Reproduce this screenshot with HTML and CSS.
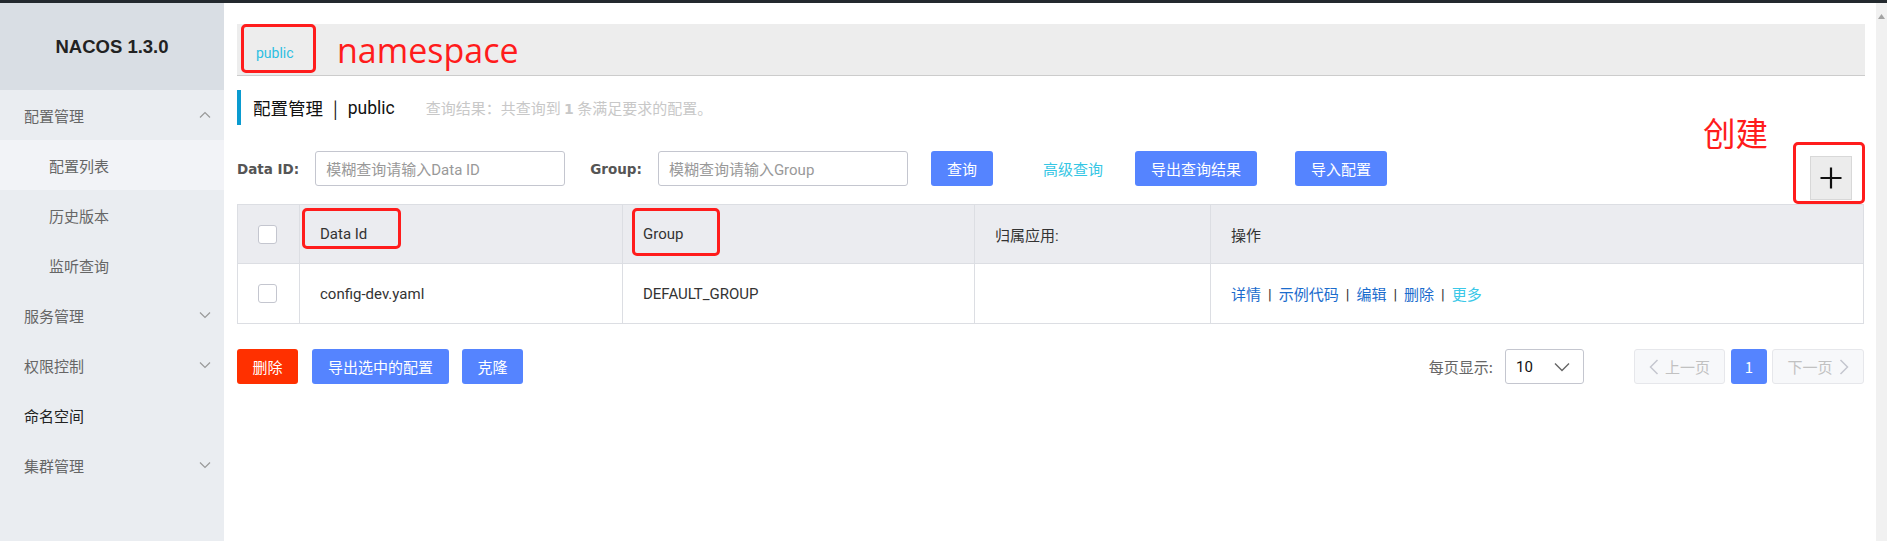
FILE: index.html
```html
<!DOCTYPE html>
<html lang="zh-CN">
<head>
<meta charset="utf-8">
<title>Nacos</title>
<link rel="stylesheet" href="styles.css">
</head>
<body>
<div class="topbar"></div>
<div class="layout">
  <aside class="sidebar">
    <div class="logo">NACOS 1.3.0</div>
    <ul class="menu">
      <li class="item open">配置管理<svg class="chev" width="12" height="8" viewBox="0 0 12 8"><polyline points="1,6.5 6,1.5 11,6.5" fill="none" stroke="#999" stroke-width="1.2"/></svg></li>
      <li class="item sub active">配置列表</li>
      <li class="item sub">历史版本</li>
      <li class="item sub">监听查询</li>
      <li class="item">服务管理<svg class="chev" width="12" height="8" viewBox="0 0 12 8"><polyline points="1,1.5 6,6.5 11,1.5" fill="none" stroke="#999" stroke-width="1.2"/></svg></li>
      <li class="item">权限控制<svg class="chev" width="12" height="8" viewBox="0 0 12 8"><polyline points="1,1.5 6,6.5 11,1.5" fill="none" stroke="#999" stroke-width="1.2"/></svg></li>
      <li class="item leaf">命名空间</li>
      <li class="item">集群管理<svg class="chev" width="12" height="8" viewBox="0 0 12 8"><polyline points="1,1.5 6,6.5 11,1.5" fill="none" stroke="#999" stroke-width="1.2"/></svg></li>
    </ul>
  </aside>

  <main class="main">
    <div class="ns-bar"><span class="ns-link">public</span></div>

    <div class="title-row">
      <span class="title">配置管理</span><span class="title-sep">|</span><span class="title-ns">public</span>
      <span class="result">查询结果：共查询到 <b>1</b> 条满足要求的配置。</span>
    </div>

    <div class="search-row">
      <label class="s-label">Data ID:</label>
      <div class="s-input">模糊查询请输入Data ID</div>
      <label class="s-label g">Group:</label>
      <div class="s-input">模糊查询请输入Group</div>
      <button class="btn btn-query">查询</button>
      <span class="adv">高级查询</span>
      <button class="btn btn-export">导出查询结果</button>
      <button class="btn btn-import">导入配置</button>
      <button class="plus-btn"><svg width="24" height="24" viewBox="0 0 24 24"><path d="M12 1.5v21M1.5 12h21" stroke="#111" stroke-width="2.2" fill="none"/></svg></button>
    </div>

    <table class="grid">
      <colgroup>
        <col style="width:62px"><col style="width:323px"><col style="width:352px"><col style="width:236px"><col>
      </colgroup>
      <thead>
        <tr>
          <th class="ck"><span class="checkbox"></span></th>
          <th>Data Id</th>
          <th>Group</th>
          <th>归属应用:</th>
          <th>操作</th>
        </tr>
      </thead>
      <tbody>
        <tr>
          <td class="ck"><span class="checkbox"></span></td>
          <td>config-dev.yaml</td>
          <td>DEFAULT_GROUP</td>
          <td></td>
          <td class="ops"><a>详情</a><span class="sep">|</span><a>示例代码</a><span class="sep">|</span><a>编辑</a><span class="sep">|</span><a>删除</a><span class="sep">|</span><a class="more">更多</a></td>
        </tr>
      </tbody>
    </table>

    <div class="footer-row">
      <button class="btn btn-danger">删除</button>
      <button class="btn btn-sel">导出选中的配置</button>
      <button class="btn btn-clone">克隆</button>
      <span class="page-size-label">每页显示:</span>
      <div class="select"><span>10</span><svg width="16" height="10" viewBox="0 0 16 10"><polyline points="1,1.5 8,8.5 15,1.5" fill="none" stroke="#666" stroke-width="1.4"/></svg></div>
      <button class="pg pg-prev"><svg width="10" height="16" viewBox="0 0 10 16"><polyline points="8.5,1 1.5,8 8.5,15" fill="none" stroke="#c4c6cf" stroke-width="1.5"/></svg>上一页</button>
      <button class="pg pg-cur">1</button>
      <button class="pg pg-next">下一页<svg width="10" height="16" viewBox="0 0 10 16"><polyline points="1.5,1 8.5,8 1.5,15" fill="none" stroke="#c4c6cf" stroke-width="1.5"/></svg></button>
    </div>

    <!-- red annotations -->
    <div class="anno anno-public"></div>
    <div class="anno-text anno-ns">namespace</div>
    <div class="anno anno-dataid"></div>
    <div class="anno anno-group"></div>
    <div class="anno-text anno-create">创建</div>
    <div class="anno anno-plus"></div>
  </main>

  <div class="scrollbar"><svg width="7" height="5" viewBox="0 0 7 5"><polygon points="0,5 3.5,0 7,5" fill="#a3a3a3"/></svg></div>
</div>
</body>
</html>
```

FILE: styles.css
```css
* { box-sizing: border-box; }
html, body { margin: 0; padding: 0; }
body {
  width: 1887px;
  height: 541px;
  overflow: hidden;
  background: #fff;
  color: #333;
  font-family: Roboto, "Noto Sans CJK SC", sans-serif;
  font-size: 15px;
}
.topbar { height: 3px; background: #23292e; }
.layout { display: flex; height: 538px; }

/* sidebar */
.sidebar { width: 224px; flex: none; background: #eaedf1; }
.logo {
  height: 87px;
  background: #d9dee4;
  display: flex; align-items: center; justify-content: center;
  font-family: "Liberation Sans", Arial, sans-serif;
  font-weight: bold; font-size: 18.5px; color: #222;
}
.menu { list-style: none; margin: 0; padding: 0; }
.item {
  height: 50px;
  display: flex; align-items: center; justify-content: space-between;
  padding: 0 13px 0 24px;
  color: #666; font-size: 15px;
  font-family: "Noto Sans CJK SC", sans-serif;
}
.item.sub { padding-left: 49px; }
.item.active { background: #f2f3f7; }
.item.leaf { color: #222; }
.chev { flex: none; }

/* main */
.main {
  flex: 1; position: relative;
  padding: 21px 11px 0 13px;
}
.ns-bar {
  height: 52px;
  background: #ededed;
  border-bottom: 1px solid #cccccc;
  display: flex; align-items: center;
  padding: 6px 0 0 19px;
}
.ns-link { color: #2dbfe2; font-size: 14px; font-family: Roboto, "Noto Sans CJK SC", sans-serif; }

.title-row {
  margin-top: 14px;
  height: 35px;
  border-left: 4px solid #0a9bd0;
  display: flex; align-items: center;
  padding-left: 12px;
  font-family: "Noto Sans CJK SC", sans-serif;
}
.title { font-size: 17.5px; color: #111; }
.title-sep { font-size: 17.5px; color: #111; margin: 0 10px; }
.title-ns { font-size: 17.5px; color: #111; font-family: Roboto, sans-serif; }
.result { margin-left: 31px; font-size: 15px; color: #c8c8c8; }
.result b { font-weight: bold; font-family: "DejaVu Sans", sans-serif; font-size: 14px; }

.search-row {
  margin-top: 26px;
  height: 53px;
  display: flex; align-items: flex-start;
}
.s-label {
  height: 35px; display: flex; align-items: center;
  font-family: "DejaVu Sans", sans-serif; font-weight: bold; font-size: 13.5px; color: #555;
  margin-right: 16px;
}
.s-label.g { margin-left: 25px; }
.s-input {
  width: 250px; height: 35px;
  border: 1px solid #c4c6cf; border-radius: 3px;
  padding-left: 10px;
  display: flex; align-items: center;
  color: #999; font-size: 15px;
  font-family: Roboto, "Noto Sans CJK SC", sans-serif;
}
.btn {
  height: 35px; border: none; border-radius: 3px;
  color: #fff; font-size: 15px;
  font-family: "Noto Sans CJK SC", sans-serif;
  padding: 0; cursor: pointer;
  background: #5584ff;
}
.btn-query { width: 62px; margin-left: 23px; }
.adv { height: 35px; display: flex; align-items: center; margin-left: 50px; color: #35c6e4; font-size: 15px; font-family: "Noto Sans CJK SC", sans-serif; }
.btn-export { width: 122px; margin-left: 32px; }
.btn-import { width: 92px; margin-left: 38px; }
.plus-btn {
  margin-left: auto; margin-right: 13px; margin-top: 5px;
  width: 42px; height: 44px;
  background: #ececec; border: 1px solid #d8d8d8; border-radius: 0;
  display: flex; align-items: center; justify-content: center; padding: 0;
}

.grid {
  width: 1627px;
  border-collapse: collapse;
  table-layout: fixed;
  border: 1px solid #dcdee3;
}
.grid th, .grid td {
  text-align: left; font-weight: normal;
  padding: 0 0 0 20px;
  border: 1px solid #dcdee3;
  font-size: 15px; color: #333;
  font-family: Roboto, "Noto Sans CJK SC", sans-serif;
}
.grid th { height: 59px; background: #ebecf0; }
.grid td { height: 60px; background: #fff; }
.grid .ck { padding: 0 0 0 20px; }
.checkbox {
  display: block; width: 19px; height: 19px;
  border: 1px solid #c4c6cf; border-radius: 3px; background: #fff;
}
.ops a { color: #1b6ccd; font-family: "Noto Sans CJK SC", sans-serif; }
.ops a.more { color: #3bc8e8; }
.ops .sep { color: #333; margin: 0 7px; }

.footer-row {
  margin-top: 25px;
  display: flex; align-items: center;
}
.btn-danger { width: 61px; background: #ff3000; }
.btn-sel { width: 137px; margin-left: 14px; }
.btn-clone { width: 61px; margin-left: 13px; }
.page-size-label { margin-left: auto; color: #666; font-size: 15px; font-family: "Noto Sans CJK SC", sans-serif; }
.select {
  width: 79px; height: 35px; margin-left: 12px;
  border: 1px solid #c4c6cf; border-radius: 3px;
  display: flex; align-items: center; justify-content: space-between;
  padding: 0 13px 0 10px;
  color: #111; font-size: 15px;
}
.pg {
  height: 35px; border-radius: 3px; font-size: 15px;
  font-family: "Noto Sans CJK SC", sans-serif;
  display: flex; align-items: center; justify-content: center; gap: 6px;
  padding: 0;
}
.pg-prev { width: 91px; margin-left: 50px; background: #f7f8fa; border: 1px solid #e6e7eb; color: #c1c1c1; }
.pg-cur { width: 36px; margin-left: 6px; background: #5584ff; border: none; color: #fff; }
.pg-next { width: 92px; margin-left: 5px; margin-right: 1px; background: #f7f8fa; border: 1px solid #e6e7eb; color: #c1c1c1; }

.scrollbar {
  width: 11px; flex: none; background: #f1f1f1;
  display: flex; justify-content: center; padding-top: 11px;
}
.scrollbar svg { display: block; }

/* annotations */
.anno {
  position: absolute;
  border: 3px solid #ff1c1c; border-radius: 5px;
}
.anno-public { left: 17px; top: 21px; width: 75px; height: 49px; }
.anno-dataid { left: 78px; top: 205px; width: 99px; height: 41px; }
.anno-group { left: 408px; top: 205px; width: 88px; height: 48px; }
.anno-plus { left: 1569px; top: 139px; width: 72px; height: 62px; }
.anno-text {
  position: absolute; color: #ff1c1c; line-height: 1;
  font-family: "Noto Sans CJK SC", sans-serif;
}
.anno-ns { left: 113px; top: 30px; font-size: 34px; font-family: "Open Sans", "Noto Sans", sans-serif; }
.anno-create { left: 1479px; top: 113px; font-size: 32.5px; }
```
